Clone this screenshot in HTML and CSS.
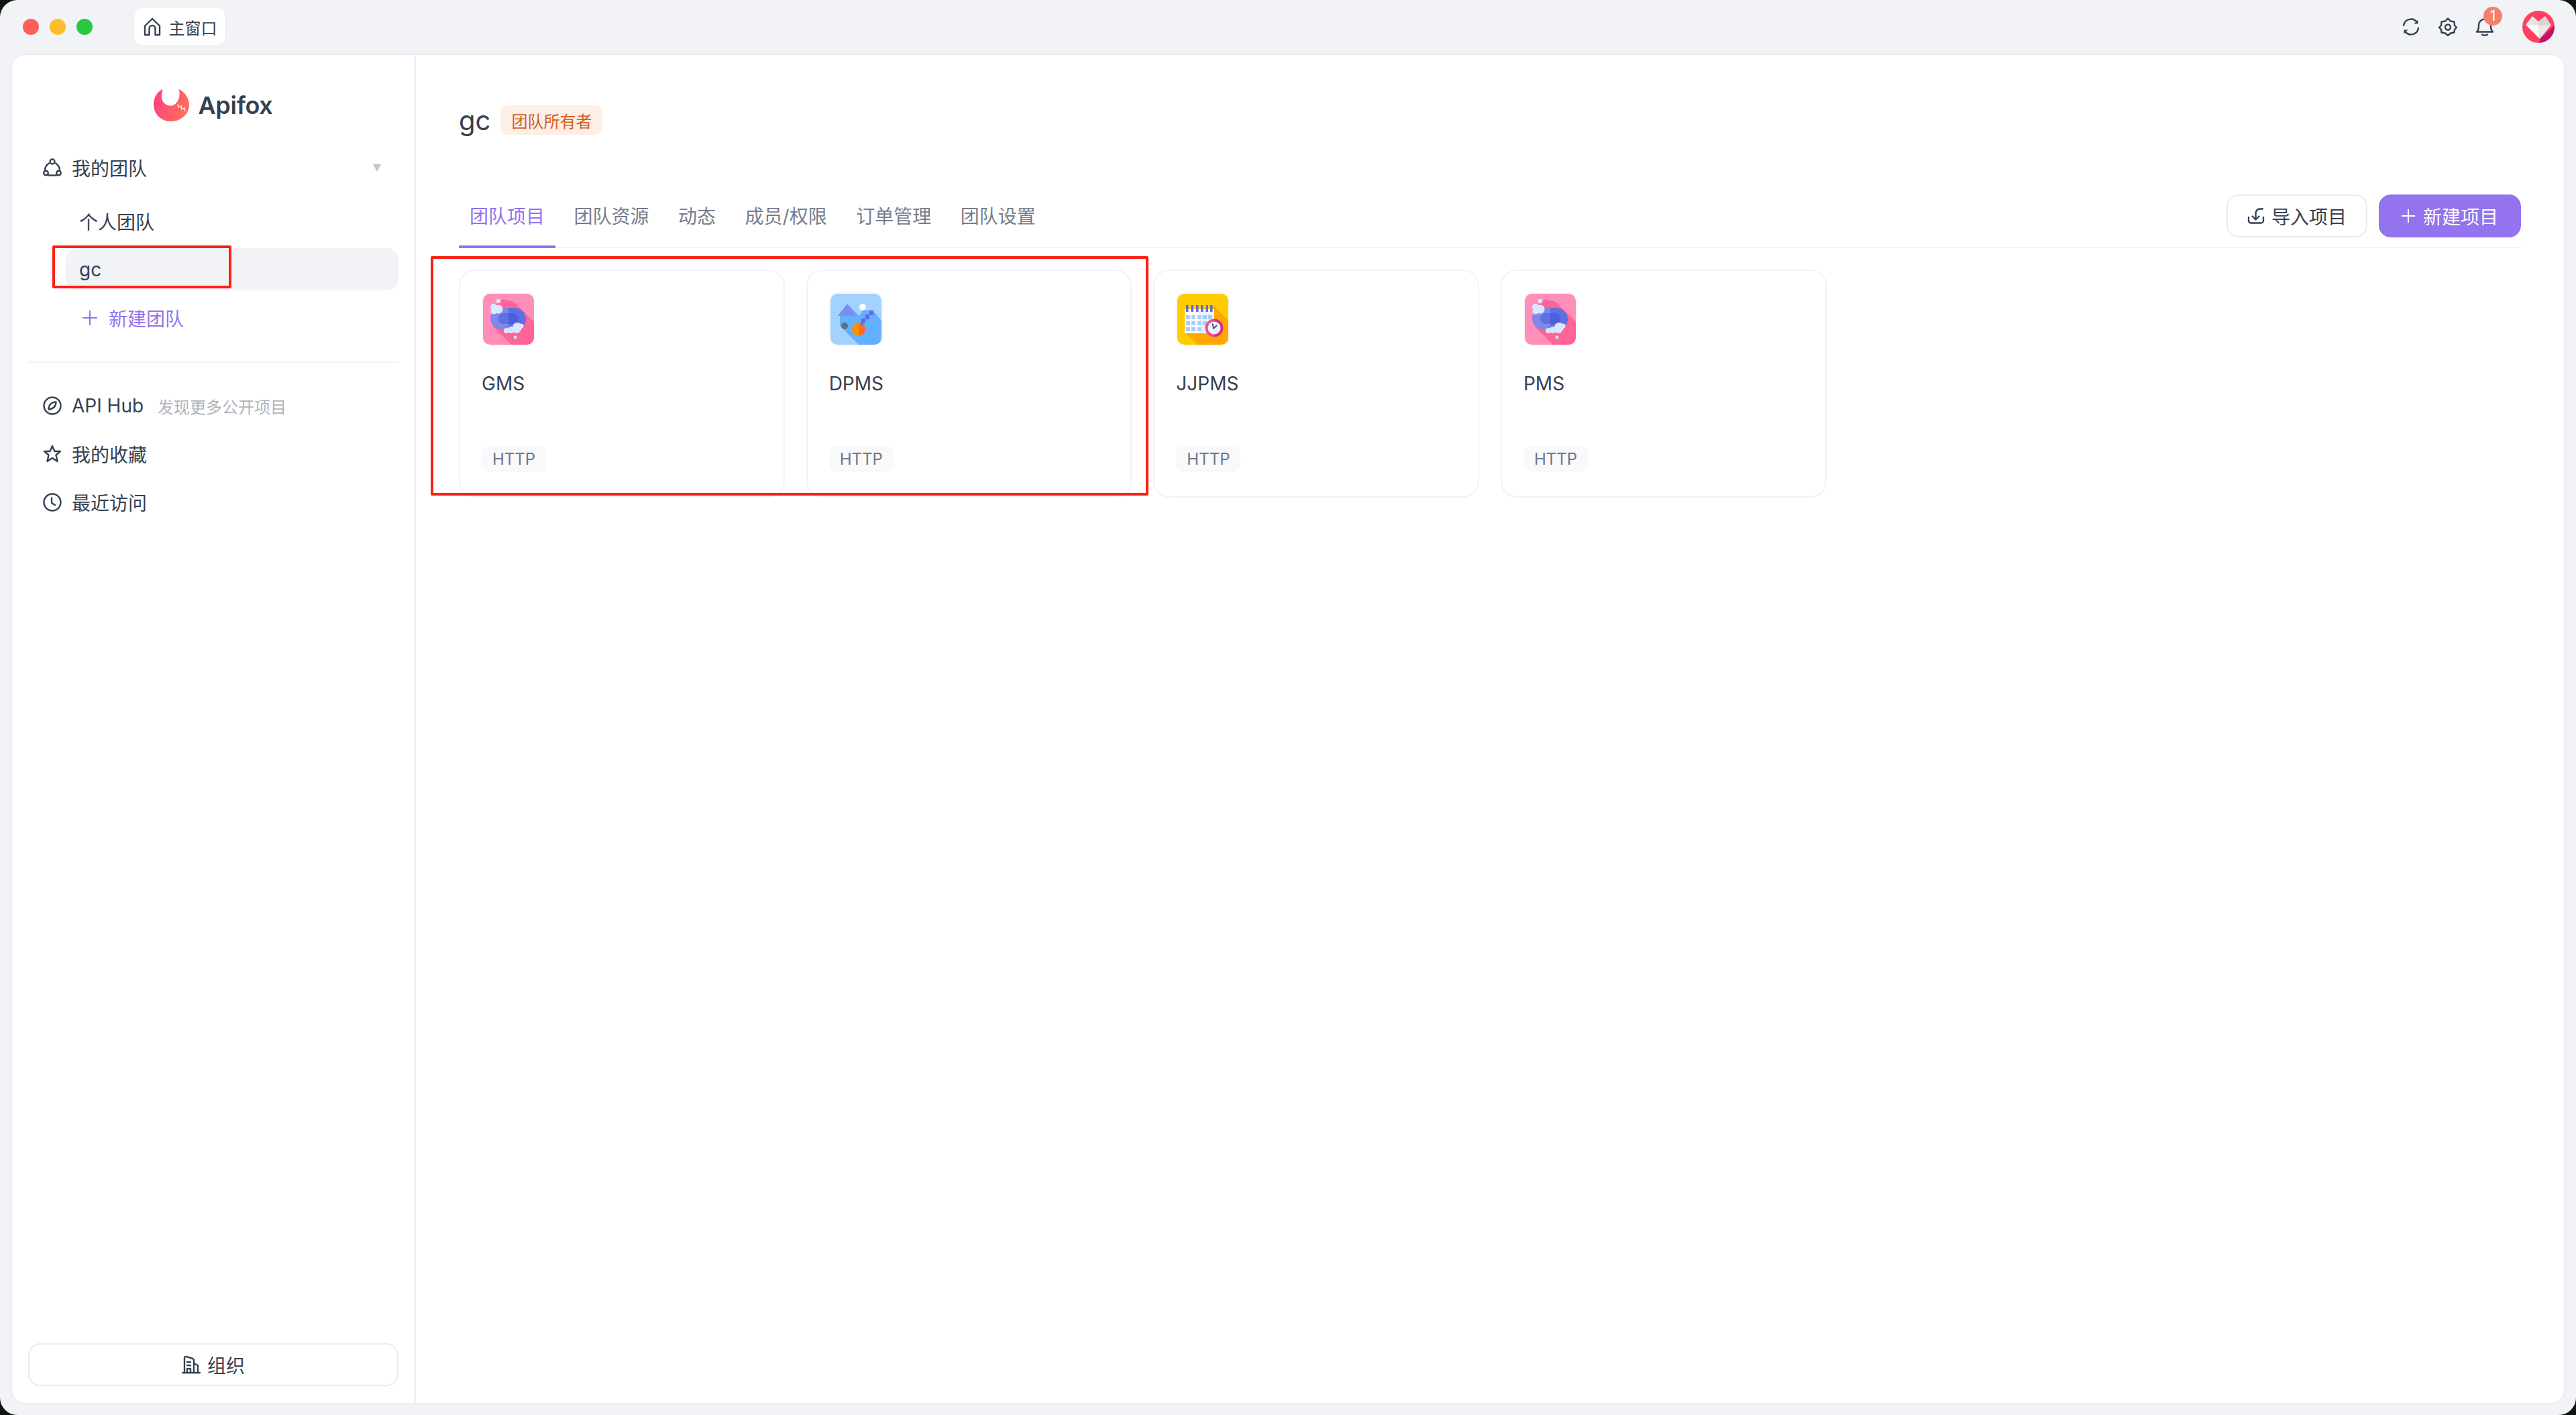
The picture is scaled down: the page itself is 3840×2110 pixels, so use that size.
FILE: index.html
```html
<!DOCTYPE html>
<html lang="zh-CN">
<head>
    <meta charset="UTF-8">
    <title>Apifox</title>
    <link rel="stylesheet" href="styles.css">
</head>
<body>
    <svg class="defs">
        <symbol id="soap" viewBox="0 0 76 76">
            <rect width="76" height="76" fill="#ff8fb8"/>
            <polygon points="30,8 46,12 76,42 76,76 42,76 15,49 15,20" fill="#ff6398"/>
            <path d="M38 21H30C19 21 11 28 11 37C11 47 21 54 31 54H38Z" fill="#7e88e9"/>
            <path d="M38 21H46C56 21 64 28 64 38C64 47 56 54 46 54H38Z" fill="#5f70e1"/>
            <path d="M38 29H31C26 29 23 33 23 37C23 42 26 45 31 45H38Z" fill="#5f70e2"/>
            <path d="M38 29H45C50 29 53 33 53 37C53 42 50 45 45 45H38Z" fill="#4c5fdf"/>
            <g fill="#d9e8ff">
                <circle cx="23" cy="11" r="3.2"/>
                <circle cx="16" cy="20" r="5"/>
                <circle cx="16" cy="26" r="4.6"/>
                <circle cx="23" cy="23" r="6.6"/>
                <circle cx="35" cy="55" r="4"/>
                <circle cx="42" cy="54" r="5"/>
                <circle cx="51" cy="50" r="7"/>
                <circle cx="50" cy="53" r="6"/>
                <circle cx="57" cy="48" r="3.6"/>
                <circle cx="48" cy="65" r="2.4"/>
            </g>
        </symbol>
    </svg>

    <div class="window">
        <header class="titlebar">
            <div class="lights">
                <span class="light red"></span>
                <span class="light yellow"></span>
                <span class="light green"></span>
            </div>
            <div class="main-tab">
                <svg class="ico" viewBox="0 0 28 28"><path d="M3 26V12.5L14 2L25 12.5V26H18.5V16.5a4.5 4.5 0 0 0-9 0V26Z"/></svg>
                主窗口
            </div>
            <div class="tools">
                <svg class="ico" viewBox="0 0 28 28"><path d="M3 12A11 11 0 0 1 23 7.5"/><path d="M25 16A11 11 0 0 1 5 20.5"/><path class="solid" d="M24.500 3.500V9.500H18.500Z"/><path class="solid" d="M3.500 24.500V18.500H9.500Z"/></svg>
                <svg class="ico" viewBox="0 0 28 28"><path d="M14 1.500L18 5.500L23.500 6.500L24 12L27 15L24 18L23.500 22.500L18 23.500L14 27L10 23.500L4.500 22.500L4 18L1 15L4 12L4.500 6.500L10 5.500Z"/><circle cx="14" cy="14.500" r="4"/></svg>
                <div class="bell">
                    <svg class="ico" viewBox="0 0 28 28"><path d="M2 21.500C5 19 5 16 5 11.500a9 9 0 0 1 18 0C23 16 23 19 26 21.500Z"/><path d="M10 25.500a5 3 0 0 0 8 0"/></svg>
                    <span class="badge">1</span>
                </div>
                <svg class="avatar" viewBox="0 0 48 48">
                    <rect width="48" height="48" fill="#ff4060"/>
                    <polygon points="26,48 48,48 48,22 26,42" fill="#c0146c"/>
                    <polygon points="5,21 15,8 24,16 24,30" fill="#e8e6e3"/>
                    <polygon points="24,16 34,8 43,21 24,30" fill="#d9d4cf"/>
                    <polygon points="5,21 24,22 26,42" fill="#ffffff"/>
                    <polygon points="24,22 43,21 26,42" fill="#eceae6"/>
                </svg>
            </div>
        </header>

        <div class="panel">
            <aside class="sidebar">
                <div class="brand">
                    <svg class="brand-mark" viewBox="0 0 53 48">
                        <defs>
                            <linearGradient id="fox" x1="0" y1="0" x2="1" y2="0.300">
                                <stop offset="0" stop-color="#ff3f80"/>
                                <stop offset="1" stop-color="#ff6c5c"/>
                            </linearGradient>
                        </defs>
                        <path d="M14 0C4 4 0 14 0 23C0 37 11 48 26 48C41 48 53 37 53 23C53 14 47 4 37 0C41 9 37 19 31 23C27 26 19 25 15 20C11 15 11 7 14 0Z" fill="url(#fox)"/>
                        <path class="zig" d="M36 22L37 27L41 25L42 30L46 28L47 33"/>
                    </svg>
                    <span class="brand-name">Apifox</span>
                </div>

                <div class="nav-row team-head">
                    <svg class="ico" viewBox="0 0 28 28"><circle cx="14" cy="5" r="3.500"/><circle cx="4.500" cy="22" r="3.300"/><circle cx="23.500" cy="22" r="3.300"/><path d="M9 7.500C5 10 3 14 3 18.500"/><path d="M19 7.500C23 10 25 14 25 18.500"/><path d="M8 25.500H20"/></svg>
                    我的团队
                    <span class="caret"></span>
                </div>
                <div class="team-list">
                    <div class="team">个人团队</div>
                    <div class="team active">gc</div>
                    <div class="team add"><span class="plus"></span>新建团队</div>
                </div>

                <div class="divider"></div>

                <div class="nav-list">
                    <div class="nav-row">
                        <svg class="ico" viewBox="0 0 28 28"><circle cx="14" cy="14" r="12.500"/><path d="M19.500 8.500C19.500 14 16 19 8.500 19.500C8.500 13 12.500 8.500 19.500 8.500Z"/></svg>
                        API Hub
                        <span class="nav-hint">发现更多公开项目</span>
                    </div>
                    <div class="nav-row">
                        <svg class="ico" viewBox="0 0 28 28"><path d="M14 2L17.500 10H26L19.500 15.500L21.500 25L14 20L6.500 25L8.500 15.500L2 10H10.500Z"/></svg>
                        我的收藏
                    </div>
                    <div class="nav-row">
                        <svg class="ico" viewBox="0 0 28 28"><circle cx="14" cy="14" r="12.500"/><path d="M13 7.500V15L18 18"/></svg>
                        最近访问
                    </div>
                </div>

                <button class="btn org-btn">
                    <svg class="ico" viewBox="0 0 28 28"><path d="M1 26H27"/><path d="M4 26V4C4 2 5 1.500 7 2L15 4.500C17 5 18 6 18 8V26"/><path d="M18 12L24 15V26"/><path d="M8 10H13M8 15H13"/><path d="M8 26V20H13V26"/></svg>
                    组织
                </button>
            </aside>

            <main class="content">
                <div class="team-title">
                    <span class="team-name">gc</span>
                    <span class="owner-tag">团队所有者</span>
                </div>

                <div class="tabbar">
                    <nav class="tabs">
                        <a class="tab current">团队项目</a>
                        <a class="tab">团队资源</a>
                        <a class="tab">动态</a>
                        <a class="tab">成员/权限</a>
                        <a class="tab">订单管理</a>
                        <a class="tab">团队设置</a>
                    </nav>
                    <div class="actions">
                        <button class="btn">
                            <svg class="ico small" viewBox="0 0 26 26"><path d="M2 15V20a3.500 3.500 0 0 0 3.500 3.500H20.500A3.500 3.500 0 0 0 24 20V15"/><path d="M23 2.500H19A6.500 6.500 0 0 0 12.500 9V18"/><path d="M7.500 13.500L12.500 18.500L17.500 13.500"/></svg>
                            导入项目
                        </button>
                        <button class="btn primary"><span class="plus"></span>新建项目</button>
                    </div>
                </div>

                <div class="projects">
                    <div class="card">
                        <div class="project-icon"><svg viewBox="0 0 76 76"><use href="#soap"/></svg></div>
                        <div class="project-name">GMS</div>
                        <span class="http-tag">HTTP</span>
                    </div>
                    <div class="card">
                        <div class="project-icon">
                            <svg viewBox="0 0 76 76">
                                <rect width="76" height="76" fill="#a3d2ff"/>
                                <polygon points="25,15 43,33 48,24 63,25 76,40 76,76 42,76 14,48 14,33" fill="#64b0ff"/>
                                <polygon points="25,15 39,33 11,33" fill="#7a8ef0"/>
                                <circle cx="48" cy="20" r="5" fill="#ffffff"/>
                                <circle cx="21" cy="48" r="5" fill="#646b80"/>
                                <path d="M42 43A10 10 0 0 0 42 63Z" fill="#ff9100"/>
                                <path d="M42 43A10 10 0 0 1 42 63Z" fill="#ff6d1a"/>
                                <path d="M46 47V37H52V31H58V25H64V32H58V38H52V44H49V47Z" fill="#6068e8"/>
                            </svg>
                        </div>
                        <div class="project-name">DPMS</div>
                        <span class="http-tag">HTTP</span>
                    </div>
                    <div class="card">
                        <div class="project-icon">
                            <svg viewBox="0 0 76 76">
                                <rect width="76" height="76" fill="#ffcc00"/>
                                <polygon points="55,18 76,40 76,76 30,76 11,57" fill="#ffa800"/>
                                <rect x="11" y="23" width="22" height="36" fill="#ffffff"/>
                                <rect x="33" y="23" width="22" height="36" fill="#e9f2ff"/>
                                <g fill="#5b6ae0">
                                    <rect x="13" y="17" width="3.500" height="10"/>
                                    <rect x="20.500" y="17" width="3.500" height="10"/>
                                    <rect x="28" y="17" width="3.500" height="10"/>
                                    <rect x="35" y="17" width="3.500" height="10"/>
                                    <rect x="42.500" y="17" width="3.500" height="10"/>
                                    <rect x="49" y="17" width="3.500" height="10"/>
                                </g>
                                <g fill="#a6cdff">
                                    <rect x="13" y="32" width="6" height="6"/><rect x="21" y="32" width="6" height="6"/><rect x="30" y="32" width="6" height="6"/><rect x="38" y="32" width="6" height="6"/><rect x="46" y="32" width="6" height="6"/>
                                    <rect x="13" y="41" width="6" height="6"/><rect x="21" y="41" width="6" height="6"/><rect x="30" y="41" width="6" height="6"/><rect x="38" y="41" width="6" height="6"/>
                                    <rect x="13" y="50" width="6" height="6"/><rect x="21" y="50" width="6" height="6"/><rect x="30" y="50" width="6" height="6"/>
                                </g>
                                <path d="M55 37.500A13.500 13.500 0 0 0 55 64.500Z" fill="#ef4f8d"/>
                                <path d="M55 37.500A13.500 13.500 0 0 1 55 64.500Z" fill="#d8307e"/>
                                <circle cx="55" cy="51" r="9.500" fill="#e9f3ff"/>
                                <path d="M54 52L52.500 44.500M54 52L59 47" stroke="#4a5064" stroke-width="1.800" fill="none"/>
                            </svg>
                        </div>
                        <div class="project-name">JJPMS</div>
                        <span class="http-tag">HTTP</span>
                    </div>
                    <div class="card">
                        <div class="project-icon"><svg viewBox="0 0 76 76"><use href="#soap"/></svg></div>
                        <div class="project-name">PMS</div>
                        <span class="http-tag">HTTP</span>
                    </div>
                </div>
            </main>
        </div>

        <!-- red annotation boxes drawn on the screenshot -->
        <div class="mark mark-team"></div>
        <div class="mark mark-cards"></div>
    </div>
</body>
</html>
```

FILE: styles.css
```css
* {
    box-sizing: border-box;
}
html, body {
    height: 100%;
}
body {
    margin: 0;
    background-color: #10160f;
    font-family: Inter, "Noto Sans CJK SC", sans-serif;
    font-size: 28px;
    color: #354052;
}
.defs {
    display: none;
}
.window {
    position: relative;
    height: 100%;
    display: flex;
    flex-direction: column;
    background-color: #f2f3f7;
    border-radius: 26px;
    overflow: hidden;
}

/* title bar */
.titlebar {
    height: 80px;
    margin-bottom: 2px;
    padding: 0 32px 0 34px;
    display: flex;
    align-items: center;
    flex-shrink: 0;
}
.lights {
    display: flex;
    gap: 16px;
}
.light {
    width: 24px;
    height: 24px;
    border-radius: 50%;
}
.light.red { background-color: #ff5f57; }
.light.yellow { background-color: #febc2e; }
.light.green { background-color: #28c840; }
.main-tab {
    margin-left: 62px;
    width: 136px;
    height: 56px;
    display: flex;
    align-items: center;
    justify-content: center;
    gap: 11px;
    background: white;
    border-radius: 14px;
    box-shadow: 0 1px 3px rgba(0,0,0,0.06);
    font-size: 24px;
}
.ico {
    width: 28px;
    height: 28px;
    flex-shrink: 0;
    fill: none;
    stroke: #354052;
    stroke-width: 2.4;
    stroke-linecap: round;
    stroke-linejoin: round;
}
.ico.small {
    width: 26px;
    height: 26px;
}
.ico .solid {
    fill: #354052;
    stroke: none;
}
.tools {
    margin-left: auto;
    display: flex;
    align-items: center;
    gap: 27px;
}
.bell {
    position: relative;
    height: 28px;
}
.badge {
    position: absolute;
    top: -16px;
    left: 12px;
    width: 28px;
    height: 28px;
    border-radius: 50%;
    background-color: #f67f70;
    color: white;
    font-size: 21px;
    line-height: 28px;
    text-align: center;
}
.avatar {
    width: 48px;
    height: 48px;
    margin-left: 15px;
    border-radius: 50%;
}

/* white panel */
.panel {
    flex: 1;
    min-height: 0;
    margin: 0 18px 18px;
    display: flex;
    background: white;
    border-radius: 20px;
    box-shadow: 0 0 0 2px #ebecf1;
}
.sidebar {
    width: 602px;
    flex-shrink: 0;
    padding: 51px 24px 25px 24px;
    display: flex;
    flex-direction: column;
    border-right: 2px solid #ebecf1;
}
.brand {
    height: 48px;
    display: flex;
    align-items: center;
    justify-content: center;
    gap: 13px;
}
.brand-mark {
    width: 53px;
    height: 48px;
}
.zig {
    fill: none;
    stroke: white;
    stroke-width: 1.300;
}
.brand-name {
    font-size: 36px;
    font-weight: 600;
    letter-spacing: -0.3px;
}
.nav-row {
    height: 60px;
    padding-left: 22px;
    display: flex;
    align-items: center;
    gap: 15px;
}
.team-head {
    margin-top: 39px;
}
.caret {
    margin-left: auto;
    margin-right: 26px;
    width: 0;
    height: 0;
    border-left: 6px solid transparent;
    border-right: 6px solid transparent;
    border-top: 11px solid #c4c6cd;
}
.team-list {
    margin-top: 18px;
    margin-left: 56px;
    display: flex;
    flex-direction: column;
    gap: 9px 0;
}
.team {
    height: 63px;
    padding-left: 20px;
    display: flex;
    align-items: center;
    border-radius: 18px;
}
.team.active {
    background-color: #f2f3f7;
}
.team.add {
    color: #9373ee;
    padding-left: 25px;
    gap: 17px;
}
.plus {
    width: 22px;
    height: 22px;
    flex-shrink: 0;
    background:
        linear-gradient(currentColor, currentColor) center / 100% 2px no-repeat,
        linear-gradient(currentColor, currentColor) center / 2px 100% no-repeat;
}
.divider {
    height: 2px;
    margin: 34px 0;
    background-color: #f2f3f7;
}
.nav-list {
    display: flex;
    flex-direction: column;
    gap: 12px;
}
.nav-hint {
    margin-left: 6px;
    font-size: 24px;
    color: #afb3bb;
}
.btn {
    height: 64px;
    padding: 0 29px;
    display: flex;
    align-items: center;
    justify-content: center;
    gap: 10px;
    background: white;
    border: 2px solid #ebecf1;
    border-radius: 18px;
    font-family: inherit;
    font-size: 28px;
    color: #354052;
}
.org-btn {
    margin-top: auto;
}

/* main content */
.content {
    flex: 1;
    min-width: 0;
    padding: 75px 64px 0;
}
.team-title {
    height: 44px;
    display: flex;
    align-items: center;
    gap: 15px;
}
.team-name {
    font-size: 40px;
}
.owner-tag {
    height: 44px;
    padding: 0 16px;
    display: flex;
    align-items: center;
    background-color: #fdeee6;
    border-radius: 10px;
    color: #d25f1e;
    font-size: 24px;
}
.tabbar {
    margin-top: 75px;
    height: 94px;
    display: flex;
    justify-content: space-between;
    align-items: flex-start;
    border-bottom: 2px solid #f2f3f7;
}
.tabs {
    display: flex;
    gap: 11.5px;
}
.tab {
    padding: 27px 16px 23px;
    line-height: 40px;
    margin-bottom: -2px;
    border-bottom: 4px solid transparent;
    color: #767d8e;
}
.tab.current {
    color: #9373ee;
    border-bottom-color: #9373ee;
}
.actions {
    margin-top: 14px;
    display: flex;
    gap: 17px;
}
.btn.primary {
    background-color: #9373ee;
    border-color: #9373ee;
    color: white;
    gap: 12px;
    padding: 0 32px;
}
.btn.primary .plus {
    width: 20px;
    height: 20px;
}
.projects {
    margin-top: 32px;
    display: grid;
    grid-template-columns: repeat(6, 1fr);
    gap: 32px;
}
.card {
    padding: 32px 32px 36px;
    border: 2px solid #f2f3f7;
    border-radius: 24px;
}
.project-icon {
    width: 80px;
    height: 80px;
    border: 2px solid #f6f7fa;
    border-radius: 12px;
    overflow: hidden;
}
.project-icon svg {
    display: block;
    width: 76px;
    height: 76px;
    border-radius: 10px;
}
.project-name {
    margin-top: 36px;
    line-height: 40px;
}
.http-tag {
    display: inline-block;
    margin-top: 73px;
    padding: 0 16px;
    line-height: 39px;
    background-color: #f8f9fb;
    border-radius: 12px;
    font-size: 24px;
    color: #6f7689;
}

/* annotations */
.mark {
    position: absolute;
    border: 4px solid #fb2015;
    border-radius: 2px;
}
.mark-team {
    left: 78px;
    top: 366px;
    width: 267px;
    height: 64px;
}
.mark-cards {
    left: 642px;
    top: 382px;
    width: 1070px;
    height: 357px;
}
```
